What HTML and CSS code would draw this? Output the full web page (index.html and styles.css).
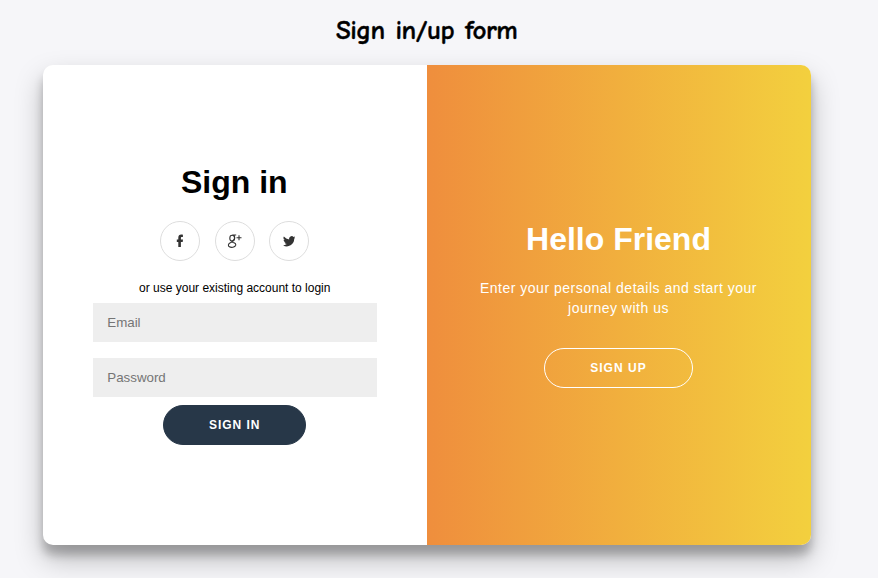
FILE: index.html
```html
<!DOCTYPE html>
<html lang="en">
<head>
<meta charset="utf-8">
<title>Sign in/up form</title>
<link rel="stylesheet" href="styles.css">
</head>
<body>
<h2 class="page-title"><span>Sign</span> <span>in/up</span> <span>form</span></h2>
<main class="container">
  <form class="form-panel">
    <h1>Sign in</h1>
    <div class="social">
      <a href="#" aria-label="Facebook"><svg width="16" height="16" viewBox="0 0 16 16"><path d="M6.3 14V8.9H4.8V6.4h1.5V4.8c0-2.1 1.1-3.2 2.9-3.2.8 0 1.4.1 1.7.1v2.2H9.9c-.8 0-1 .4-1 1v1.5H11l-.3 2.5H8.9V14z"/></svg></a>
      <a href="#" aria-label="Google plus"><svg width="16" height="16" viewBox="0 0 16 16"><g class="line"><ellipse cx="5.2" cy="5.2" rx="2.4" ry="2.9"/><path d="M9.2 2H5.4M6.8 2.5c1.4 1.3 1.1 3.5-.4 4.6C4.6 8.4 4.4 9 6.2 9.5c2.1.5 2.9 1.5 2.4 3-.7 1.7-4.3 2.4-6.2 1.3-1.7-1-1.2-3 .9-4l1.3-.6M12 2.2v5M9.5 4.7h5"/></g></svg></a>
      <a href="#" aria-label="Twitter"><svg width="12.5" height="12.5" viewBox="0 0 24 24"><path d="M24 4.6a10 10 0 0 1-2.8.8 4.9 4.9 0 0 0 2.2-2.7 10 10 0 0 1-3.1 1.2 4.9 4.9 0 0 0-8.4 4.5A14 14 0 0 1 1.7 3.1a4.9 4.9 0 0 0 1.5 6.6 4.9 4.9 0 0 1-2.2-.6 4.9 4.9 0 0 0 3.9 4.9 5 5 0 0 1-2.2.1 4.9 4.9 0 0 0 4.6 3.4A9.9 9.9 0 0 1 0 19.5a14 14 0 0 0 21.5-12.4A10 10 0 0 0 24 4.6z"/></svg></a>
    </div>
    <p class="hint">or use your existing account to login</p>
    <input type="email" placeholder="Email">
    <input type="password" placeholder="Password">
    <button class="btn" type="button">Sign in</button>
  </form>
  <section class="welcome">
    <h1>Hello Friend</h1>
    <p>Enter your personal details and start your journey with us</p>
    <button class="btn ghost" type="button">Sign up</button>
  </section>
</main>
</body>
</html>
```
FILE: styles.css
```css
* { box-sizing: border-box; }
body {
  margin: 0;
  height: 578px;
  overflow: hidden;
  background: #f6f6f9;
  font-family: "Liberation Sans", Arial, sans-serif;
  color: #000;
}
.page-title {
  display: flex;
  gap: 11px;
  margin: 13px 0 16px 336px;
  height: 36px;
  font: 700 27px/36px "Comic Sans MS", "Comic Neue", Lato, sans-serif;
  letter-spacing: -.55px;
  white-space: nowrap;
  -webkit-text-stroke: .4px #000;
}
.container {
  display: flex;
  width: 768px;
  height: 480px;
  margin-left: 43px;
  overflow: hidden;
  border-radius: 10px;
  background: #fff;
  box-shadow: 0 14px 28px rgba(0,0,0,.25), 0 10px 10px rgba(0,0,0,.22);
}
h1 { margin: 0; font-size: 32px; line-height: 37px; }
.form-panel {
  width: 384px;
  padding: 99px 50px 0 49.5px;
  display: flex;
  flex-direction: column;
  align-items: center;
}
.form-panel h1 { margin-right: 1px; }
.social { display: flex; gap: 14.5px; margin: 20px .4px 20px 0; }
.social a {
  display: flex;
  align-items: center;
  justify-content: center;
  width: 40px;
  height: 40px;
  border: 1px solid #ddd;
  border-radius: 50%;
}
.social svg { fill: #333; }
.social .line { fill: none; stroke: #333; stroke-width: 1.1; }
.hint { margin: 0 0 8px; font-size: 12px; line-height: 14px; }
input {
  width: 284px;
  height: 39px;
  margin: 0 0 16px;
  padding: 12px 14.5px;
  border: 0;
  background: #eee;
  font: 13.33px "Liberation Sans", Arial, sans-serif;
}
input::placeholder { color: #757575; }
input[type="password"] { margin-bottom: 8px; }
.btn {
  height: 40px;
  padding: 0 45px;
  border: 1px solid #273748;
  border-radius: 20px;
  background: #273748;
  color: #fff;
  font: bold 12px "Liberation Sans", Arial, sans-serif;
  letter-spacing: .95px;
  text-transform: uppercase;
}
.welcome {
  width: 384px;
  padding: 156px 41px 0 40px;
  display: flex;
  flex-direction: column;
  align-items: center;
  background: linear-gradient(to right, #ef8e3d, #f3d03e);
  color: #fff;
  text-align: center;
}
.welcome p { margin: 20px 0 30px; font-size: 14px; line-height: 20px; letter-spacing: .5px; }
.btn.ghost { background: transparent; border-color: #fff; letter-spacing: 1.05px; }
```
